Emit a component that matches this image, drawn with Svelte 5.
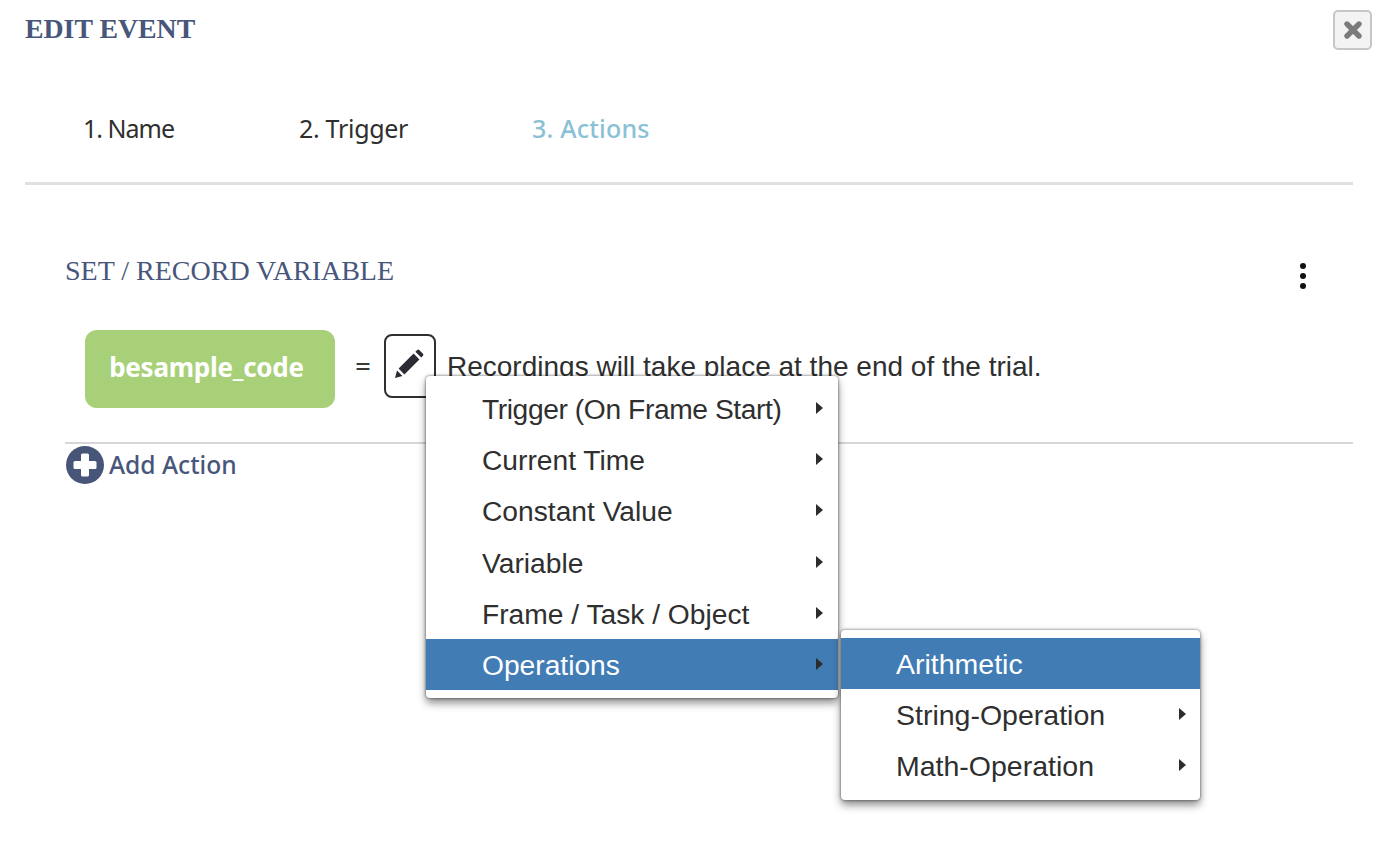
<script>
    const tabs = [
        { label: "1. Name", active: false },
        { label: "2. Trigger", active: false },
        { label: "3. Actions", active: true }
    ];
    const mainMenu = [
        { label: "Trigger (On Frame Start)", sub: true, tight: true },
        { label: "Current Time", sub: true },
        { label: "Constant Value", sub: true },
        { label: "Variable", sub: true },
        { label: "Frame / Task / Object", sub: true },
        { label: "Operations", sub: true, active: true }
    ];
    const subMenu = [
        { label: "Arithmetic", sub: false, active: true },
        { label: "String-Operation", sub: true },
        { label: "Math-Operation", sub: true }
    ];
</script>

{#snippet menuList(items, cls)}
    <ul class="menu {cls}">
        {#each items as item}
            <li class="menu-item" class:active={item.active} class:tight={item.tight}>
                <span>{item.label}</span>
                {#if item.sub}<i class="caret"></i>{/if}
            </li>
        {/each}
    </ul>
{/snippet}

<div class="dialog">
    <header class="head">
        <h1>EDIT EVENT</h1>
        <button class="close" aria-label="Close">
            <svg width="20" height="20" viewBox="0 0 20 20">
                <path d="M4 4 L16 16 M16 4 L4 16" stroke="#7b7b7b" stroke-width="5.4" stroke-linecap="round" />
            </svg>
        </button>
    </header>

    <nav class="tabs">
        {#each tabs as tab}
            <span class="tab" class:active={tab.active}>{tab.label}</span>
        {/each}
    </nav>

    <section class="action">
        <div class="action-head">
            <h2>SET / RECORD VARIABLE</h2>
            <div class="dots"><b></b><b></b><b></b></div>
        </div>

        <div class="action-row">
            <div class="chip">besample_code</div>
            <span class="equals">=</span>
            <div class="edit-wrap">
                <button class="edit" aria-label="Edit">
                    <svg width="30" height="30" viewBox="0 0 30 30">
                        <path d="M1 29 L3 21.5 L8.5 27 Z M4.6 19.6 L19.6 4.6 L25.4 10.4 L10.4 25.4 Z M21.4 2.8 L23.2 1 Q24.2 0.2 25.2 1 L29 4.8 Q29.8 5.8 29 6.8 L27.2 8.6 Z" fill="#2b2b33" />
                    </svg>
                </button>
                {@render menuList(mainMenu, "main")}
                {@render menuList(subMenu, "sub")}
            </div>
            <span class="note">Recordings will take place at the end of the trial.</span>
        </div>

        <div class="add">
            <svg width="38" height="38" viewBox="0 0 38 38">
                <circle cx="19" cy="19" r="19" fill="#465578" />
                <rect x="7.5" y="15" width="23" height="8" rx="1.5" fill="#fff" />
                <rect x="15" y="7.5" width="8" height="23" rx="1.5" fill="#fff" />
            </svg>
            <span>Add Action</span>
        </div>
    </section>
</div>

<style>
    :global(body) {
        background: #fff;
        font-family: "Liberation Sans", Arial, sans-serif;
        color: #2f2f2f;
    }

    .dialog {
        width: 1376px;
        height: 858px;
        box-sizing: border-box;
        padding: 10px 23px 0 25px;
        overflow: hidden;
    }

    /* ── Header ── */
    .head {
        display: flex;
        justify-content: space-between;
        align-items: flex-start;
        margin-right: -20px;
        padding-right: 1px;
    }
    h1 {
        margin: 0;
        padding-top: 4px;
        font: bold 27.8px/30px "Liberation Serif", serif;
        color: #47567a;
    }
    .close {
        width: 39px;
        height: 40px;
        padding: 0;
        display: flex;
        align-items: center;
        justify-content: center;
        background: #f3f3f3;
        border: 2px solid #c6c6c6;
        border-radius: 5px;
    }

    /* ── Tabs ── */
    .tabs {
        display: flex;
        height: 135px;
        box-sizing: border-box;
        padding: 55px 0 0 58px;
        border-bottom: 3px solid #e0e0e0;
        font: 400 25px/46px "Noto Sans", sans-serif;
    }
    .tab:nth-child(1) {
        width: 216px;
        letter-spacing: -1px;
    }
    .tab:nth-child(2) {
        width: 233px;
        letter-spacing: -0.3px;
    }
    .tab.active {
        color: #8ac1d6;
        font-weight: 500;
        letter-spacing: 0.2px;
    }

    /* ── Action block ── */
    .action {
        padding: 0 0 0 40px;
    }
    .action-head {
        display: flex;
        justify-content: space-between;
        align-items: center;
        height: 64px;
        margin-top: 60px;
        padding-right: 47px;
    }
    h2 {
        margin: 0 0 12px;
        font: 400 28px/32px "Liberation Serif", serif;
        color: #47567a;
    }
    .dots {
        display: flex;
        flex-direction: column;
        gap: 4px;
        margin-top: -2px;
    }
    .dots b {
        width: 6px;
        height: 6px;
        border-radius: 50%;
        background: #111;
    }

    .action-row {
        display: flex;
        align-items: flex-start;
        height: 114px;
        margin-top: 21px;
        padding-left: 20px;
        border-bottom: 2px solid #d6d6d6;
        box-sizing: border-box;
    }
    .chip {
        width: 250px;
        height: 78px;
        box-sizing: border-box;
        padding-right: 7px;
        border-radius: 12px;
        background: #a8d078;
        color: #fff;
        font: 700 26px/74px "Noto Sans", sans-serif;
        letter-spacing: -0.25px;
        text-align: center;
    }
    .equals {
        width: 49px;
        padding-left: 7px;
        box-sizing: border-box;
        text-align: center;
        font: 400 28px/70px "Noto Sans", sans-serif;
        color: #3a3a3a;
    }
    .edit-wrap {
        position: relative;
        margin-top: 4px;
    }
    .edit {
        width: 52px;
        height: 64px;
        padding: 0 2px 4px 0;
        display: flex;
        align-items: center;
        justify-content: center;
        background: #fff;
        border: 2px solid #2f2f2f;
        border-radius: 8px;
    }
    .note {
        margin: 22px 0 0 11px;
        font-size: 28px;
        line-height: 30px;
        white-space: nowrap;
    }

    .add {
        display: flex;
        align-items: center;
        gap: 5px;
        margin-top: 2px;
        padding-left: 1px;
        font: 500 24.6px/38px "Noto Sans", sans-serif;
        color: #47567a;
    }

    /* ── Context menus ── */
    .menu {
        position: absolute;
        z-index: 2;
        margin: 0;
        padding: 8px 0;
        list-style: none;
        background: #fff;
        border-radius: 4px;
        box-shadow: 0 0 3px rgba(0, 0, 0, 0.6), 0 5px 9px rgba(0, 0, 0, 0.45);
    }
    .menu.main {
        left: 42px;
        top: 42px;
        width: 412px;
        padding-top: 7px;
        font-size: 28.2px;
    }
    .menu.sub {
        left: 457px;
        top: 296px;
        width: 359px;
        font-size: 28.5px;
    }
    .menu.sub .menu-item {
        padding-left: 55px;
    }
    .menu.sub .caret {
        right: 14px;
    }
    .menu-item {
        position: relative;
        height: 51.2px;
        box-sizing: border-box;
        padding-left: 56px;
        line-height: 52px;
        white-space: nowrap;
        color: #2f2f2f;
    }
    .menu-item.tight {
        letter-spacing: -0.4px;
    }
    .menu-item.active {
        background: #417cb5;
        color: #fff;
    }
    .caret {
        position: absolute;
        right: 15px;
        top: 19px;
        border-left: 7px solid #2c2c2c;
        border-top: 6.5px solid transparent;
        border-bottom: 6.5px solid transparent;
    }
</style>
